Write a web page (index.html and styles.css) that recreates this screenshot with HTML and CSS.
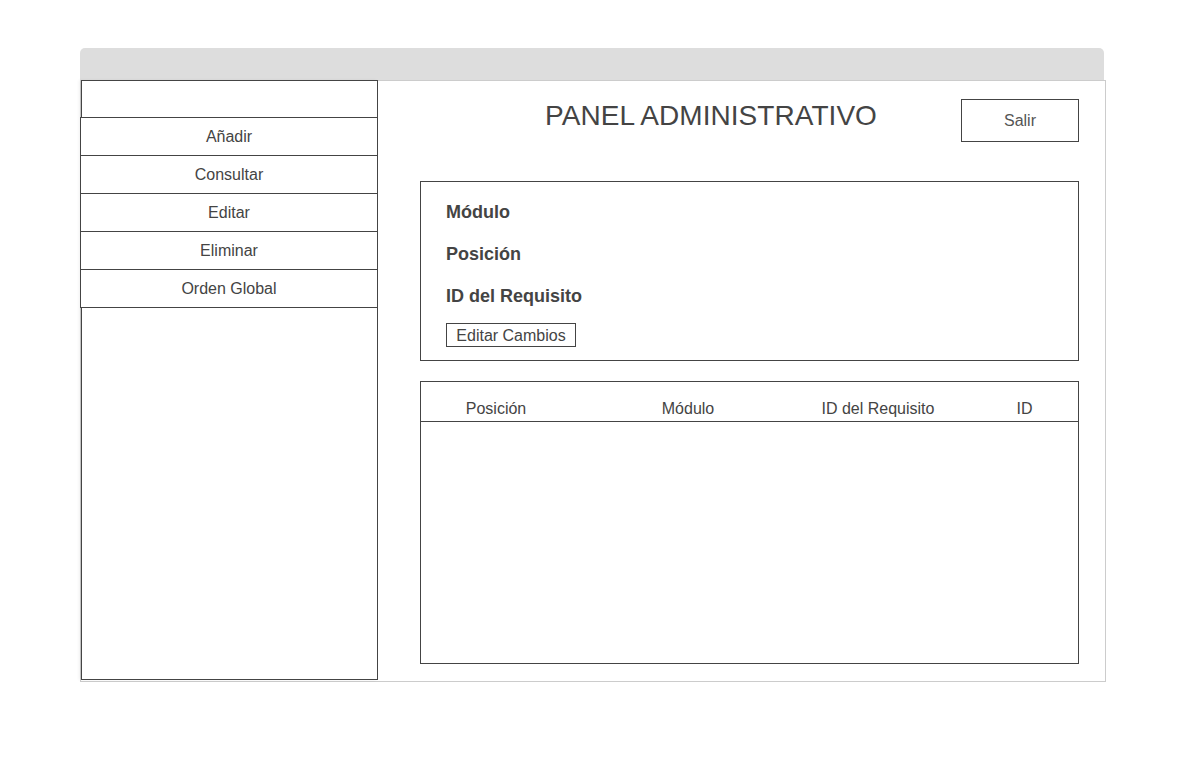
FILE: index.html
```html
<!DOCTYPE html>
<html lang="es">
<head>
<meta charset="utf-8">
<title>Panel Administrativo</title>
<link rel="stylesheet" href="styles.css">
</head>
<body>
<div class="page">
  <div class="topbar"></div>
  <div class="frame">
    <aside class="sidebar">
      <div class="side-top"></div>
      <nav class="menu">
        <div class="menu-item">Añadir</div>
        <div class="menu-item">Consultar</div>
        <div class="menu-item">Editar</div>
        <div class="menu-item">Eliminar</div>
        <div class="menu-item">Orden Global</div>
      </nav>
      <div class="side-bottom"></div>
    </aside>
    <main class="content">
      <header class="header">
        <h1 class="title">PANEL ADMINISTRATIVO</h1>
        <div class="btn-salir">Salir</div>
      </header>
      <section class="form-box">
        <div class="label">Módulo</div>
        <div class="label">Posición</div>
        <div class="label">ID del Requisito</div>
        <div class="btn-edit">Editar Cambios</div>
      </section>
      <section class="table-box">
        <div class="thead">
          <div class="th c1">Posición</div>
          <div class="th c2">Módulo</div>
          <div class="th c3">ID del Requisito</div>
          <div class="th c4">ID</div>
        </div>
        <div class="tbody"></div>
      </section>
    </main>
  </div>
</div>
</body>
</html>
```

FILE: styles.css
```css
* { box-sizing: border-box; }
html, body { margin: 0; padding: 0; background: #fff; }
body {
  font-family: "Liberation Sans", Arial, sans-serif;
  color: #444;
}
.page {
  padding-top: 48px;
  margin-left: 80px;
  width: 1026px;
}
.topbar {
  width: 1024px;
  height: 32px;
  background: #dddddd;
  border-radius: 5px 5px 0 0;
}
.frame {
  display: flex;
  width: 1026px;
  height: 602px;
  border: 1px solid #cccccc;
}
.sidebar {
  width: 297px;
  height: 600px;
  margin-top: -1px;
  display: flex;
  flex-direction: column;
  flex-shrink: 0;
  box-shadow: -2px 0 3px rgba(0, 0, 0, 0.06);
}
.side-top {
  height: 38px;
  border: 1px solid #444;
}
.menu { display: flex; flex-direction: column; }
.menu-item {
  height: 39px;
  width: 298px;
  margin-left: -1px;
  margin-top: -1px;
  border: 1px solid #444;
  display: flex;
  align-items: center;
  justify-content: center;
  font-size: 16px;
  color: #444;
}
.side-bottom {
  flex: 1;
  margin-top: -1px;
  border: 1px solid #444;
}
.content {
  flex: 1;
  padding: 18px 26px 0 42px;
}
.header {
  display: flex;
  align-items: flex-start;
}
.title {
  flex: 1;
  margin: 1px 0 0 0;
  padding-left: 41px;
  text-align: center;
  font-size: 28px;
  letter-spacing: 0.05px;
  line-height: 32px;
  font-weight: normal;
  color: #444;
}
.btn-salir {
  width: 118px;
  height: 43px;
  border: 1px solid #444;
  display: flex;
  align-items: center;
  justify-content: center;
  font-size: 16px;
  color: #555;
}
.form-box {
  margin-top: 39px;
  height: 180px;
  border: 1px solid #444;
  padding: 9px 25px 0 25px;
}
.label {
  font-size: 18px;
  font-weight: bold;
  line-height: 42px;
  color: #444;
}
.btn-edit {
  display: inline-block;
  margin-top: 6px;
  width: 130px;
  height: 24px;
  border: 1px solid #444;
  font-size: 16px;
  line-height: 23px;
  text-align: center;
  color: #444;
}
.table-box {
  margin-top: 20px;
  height: 283px;
  border: 1px solid #444;
}
.thead {
  display: grid;
  grid-template-columns: 150px 234px 146px 127px;
  height: 40px;
  border-bottom: 1px solid #444;
}
.th {
  padding-top: 18px;
  font-size: 16px;
  line-height: 18px;
  text-align: center;
  color: #444;
}
.th.c4 { padding-left: 20px; }
```
